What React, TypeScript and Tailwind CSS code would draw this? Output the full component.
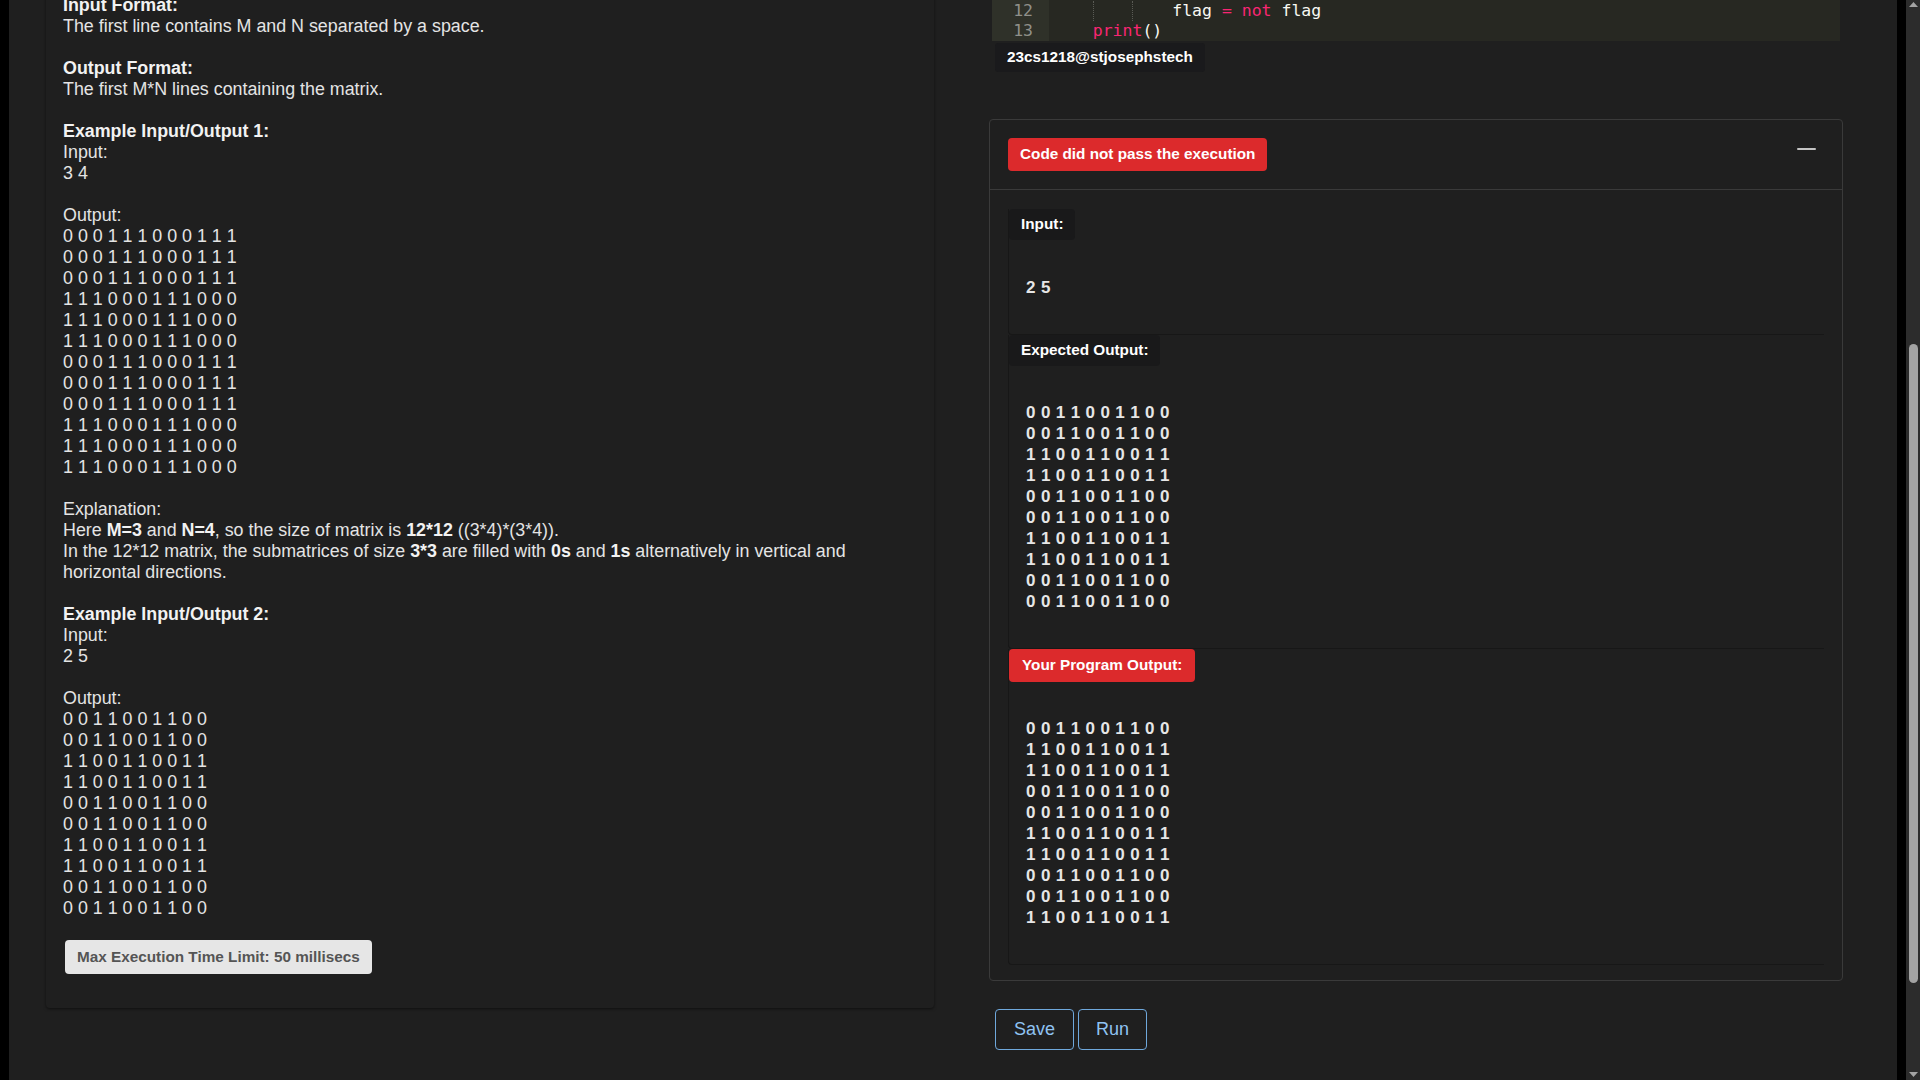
const ex1 = [
  "000111000111",
  "000111000111",
  "000111000111",
  "111000111000",
  "111000111000",
  "111000111000",
  "000111000111",
  "000111000111",
  "000111000111",
  "111000111000",
  "111000111000",
  "111000111000",
];

const ex2 = [
  "0011001100",
  "0011001100",
  "1100110011",
  "1100110011",
  "0011001100",
  "0011001100",
  "1100110011",
  "1100110011",
  "0011001100",
  "0011001100",
];

const programOut = [
  "0011001100",
  "1100110011",
  "1100110011",
  "0011001100",
  "0011001100",
  "1100110011",
  "1100110011",
  "0011001100",
  "0011001100",
  "1100110011",
];

const spaced = (row: string) => row.split("").join(" ");

function Blank() {
  return <div className="h-[21px]" />;
}

function Matrix({ rows }: { rows: string[] }) {
  return (
    <>
      {rows.map((r, i) => (
        <div key={i}>{spaced(r)}</div>
      ))}
    </>
  );
}

function ProblemCard() {
  return (
    <div className="ml-[37px] -mt-[5px] w-[888px] rounded-[4px] px-[17px] pb-[34px] shadow-[0_1px_3px_rgba(0,0,0,0.55)]">
      <div className="text-[17.85px] leading-[21px] text-[#e4e4e4]">
        <div className="font-bold text-[#f2f2f2]">Input Format:</div>
        <div>The first line contains M and N separated by a space.</div>
        <Blank />
        <div className="font-bold text-[#f2f2f2]">Output Format:</div>
        <div>The first M*N lines containing the matrix.</div>
        <Blank />
        <div className="font-bold text-[#f2f2f2]">Example Input/Output 1:</div>
        <div>Input:</div>
        <div>3 4</div>
        <Blank />
        <div>Output:</div>
        <Matrix rows={ex1} />
        <Blank />
        <div>Explanation:</div>
        <div>
          Here <b className="text-[#f2f2f2]">M=3</b> and <b className="text-[#f2f2f2]">N=4</b>, so the size of matrix is{" "}
          <b className="text-[#f2f2f2]">12*12</b> ((3*4)*(3*4)).
        </div>
        <div>
          In the 12*12 matrix, the submatrices of size <b className="text-[#f2f2f2]">3*3</b> are filled with{" "}
          <b className="text-[#f2f2f2]">0s</b> and <b className="text-[#f2f2f2]">1s</b> alternatively in vertical and
          horizontal directions.
        </div>
        <Blank />
        <div className="font-bold text-[#f2f2f2]">Example Input/Output 2:</div>
        <div>Input:</div>
        <div>2 5</div>
        <Blank />
        <div>Output:</div>
        <Matrix rows={ex2} />
      </div>
      <div className="ml-[2px] mt-[21px] inline-flex h-[34px] items-center rounded-[4px] bg-[#e6e6e6] px-[12px] text-[15.3px] font-bold text-[#555555]">
        Max Execution Time Limit: 50 millisecs
      </div>
    </div>
  );
}

function Indent({ guide }: { guide?: boolean }) {
  return (
    <span
      className={
        guide
          ? "inline-block h-[20px] w-[4ch] border-l border-dotted border-[#5a5b55] align-top"
          : "inline-block h-[20px] w-[4ch] align-top"
      }
    />
  );
}

function CodeEditor() {
  const pink = "text-[#f92672]";
  return (
    <div className="ml-[3px] flex w-[848px] bg-[#272822] font-['DejaVu_Sans_Mono',monospace] text-[16.5px] leading-[20px]">
      <div className="w-[57px] bg-[#2f3129] pr-[16px] pt-[1px] text-right text-[#8f908a]">
        <div>12</div>
        <div>13</div>
      </div>
      <div className="flex-1 whitespace-pre pl-[4px] pt-[1px] text-[#f8f8f2]">
        <div className="h-[20px]">
          <Indent />
          <Indent guide />
          <Indent guide />
          flag <span className={pink}>=</span> <span className={pink}>not</span> flag
        </div>
        <div className="h-[20px]">
          <Indent />
          <span className={pink}>print</span>()
        </div>
      </div>
    </div>
  );
}

function SectionLabel({ text, red }: { text: string; red?: boolean }) {
  return (
    <div
      className={
        red
          ? "inline-flex h-[33px] items-center rounded-[4px] bg-[#dc2a2c] px-[13px] text-[15.3px] font-bold text-white"
          : "inline-flex h-[31px] items-center rounded-[4px] bg-[#19191a] px-[12px] text-[15.3px] font-bold text-white"
      }
    >
      {text}
    </div>
  );
}

function RowsBlock({ rows }: { rows: string[] }) {
  return (
    <div className="pl-[17px] pt-[36px] pb-[36px] text-[17px] font-bold leading-[21px] tracking-[0.35px] text-[#e6e6e6]">
      <Matrix rows={rows} />
    </div>
  );
}

function ResultCard() {
  return (
    <div className="mt-[47px] w-[854px] rounded-[4px] border border-[#3a3a3a]">
      <div className="flex items-start justify-between border-b border-[#3a3a3a] p-[18px]">
        <div className="inline-flex h-[33px] items-center rounded-[4px] bg-[#dc2a2c] px-[12px] text-[15.3px] font-bold text-white">
          Code did not pass the execution
        </div>
        <div className="mr-[8px] mt-[10px] h-[2px] w-[19px] rounded-full bg-[#c4c4c4]" />
      </div>
      <div className="px-[18px] pt-[19px] pb-[15px]">
        <div className="rounded-bl-[4px] border-b border-l border-[#171717]">
          <SectionLabel text="Input:" />
          <div className="pl-[17px] pt-[37px] pb-[36px] text-[17px] font-bold leading-[21px] tracking-[0.35px] text-[#e6e6e6]">
            2 5
          </div>
        </div>
        <div className="rounded-bl-[4px] border-b border-l border-[#171717]">
          <SectionLabel text="Expected Output:" />
          <RowsBlock rows={ex2} />
        </div>
        <div className="rounded-bl-[4px] border-b border-l border-[#171717]">
          <SectionLabel text="Your Program Output:" red />
          <RowsBlock rows={programOut} />
        </div>
      </div>
    </div>
  );
}

function Scrollbar() {
  return (
    <div className="flex w-[14px] flex-col items-center bg-[#2c2c2c]">
      <svg width="9" height="5" viewBox="0 0 9 5" className="mt-[2px]">
        <polygon points="0,5 4.5,0 9,5" fill="#a3a3a3" />
      </svg>
      <div className="mt-[337px] h-[639px] w-[9px] rounded-full bg-[#a3a3a3]" />
      <div className="flex-1" />
      <svg width="9" height="5" viewBox="0 0 9 5" className="mb-[3px]">
        <polygon points="0,0 4.5,5 9,0" fill="#a3a3a3" />
      </svg>
    </div>
  );
}

export default function App() {
  return (
    <div className="flex h-screen w-full overflow-hidden bg-[#1f1f1f] font-['Liberation_Sans',Arial,sans-serif]">
      <div className="w-[9px] shrink-0 bg-black" />
      <div className="w-[980px] shrink-0">
        <ProblemCard />
      </div>
      <div className="flex-1">
        <CodeEditor />
        <div className="ml-[6px] mt-[2px] inline-flex h-[29px] items-center rounded-[3px] bg-[#1a1a1c] px-[12px] text-[15.3px] font-bold text-white">
          23cs1218@stjosephstech
        </div>
        <ResultCard />
        <div className="ml-[6px] mt-[28px] flex gap-[4px]">
          <button className="h-[41px] rounded-[4px] border border-[#6fa8dc] px-[18px] text-[18px] text-[#8fc3f2]">
            Save
          </button>
          <button className="h-[41px] rounded-[4px] border border-[#6fa8dc] px-[17px] text-[18px] text-[#8fc3f2]">
            Run
          </button>
        </div>
      </div>
      <div className="w-[9px] shrink-0 bg-black" />
      <Scrollbar />
    </div>
  );
}
